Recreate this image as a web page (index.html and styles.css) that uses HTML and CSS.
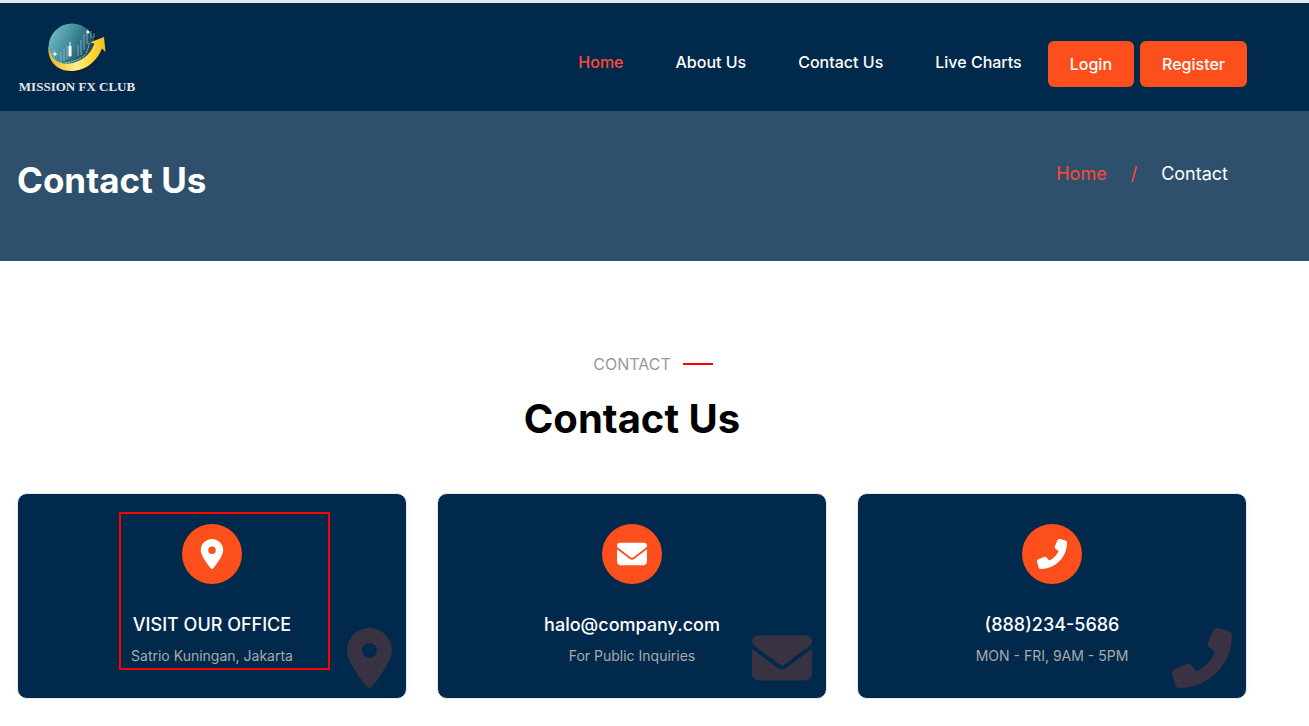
FILE: index.html
```
<!DOCTYPE html>
<html lang="en">
<head>
<meta charset="utf-8">
<meta name="viewport" content="width=device-width, initial-scale=1">
<title>Contact Us</title>
<link rel="stylesheet" href="styles.css">
</head>
<body>
<svg class="sprite" aria-hidden="true">
  <symbol id="pin" viewBox="0 0 384 512"><path d="M215.7 499.2C267 435 384 279.400 384 192C384 86 298 0 192 0S0 86 0 192c0 87.400 117 243 168.300 307.200c12.300 15.300 35.100 15.300 47.400 0zM192 128a64 64 0 1 1 0 128 64 64 0 1 1 0-128z"/></symbol>
  <symbol id="mail" viewBox="0 0 512 512"><path d="M48 64C21.500 64 0 85.500 0 112c0 15.100 7.100 29.300 19.200 38.400L236.800 313.600c11.400 8.500 27 8.500 38.400 0L492.800 150.400c12.100-9.100 19.200-23.300 19.200-38.400c0-26.500-21.500-48-48-48H48zM0 176V384c0 35.300 28.700 64 64 64H448c35.300 0 64-28.700 64-64V176L294.400 339.200c-22.800 17.100-54 17.100-76.800 0L0 176z"/></symbol>
  <symbol id="phone" viewBox="0 0 512 512"><path transform="matrix(-1 0 0 1 512 0)" d="M164.900 24.600c-7.700-18.600-28-28.500-47.400-23.200l-88 24C12.100 30.200 0 46 0 64C0 311.400 200.600 512 448 512c18 0 33.800-12.100 38.600-29.500l24-88c5.300-19.400-4.600-39.700-23.200-47.400l-96-40c-16.300-6.800-35.200-2.100-46.300 11.600L304.700 368C234.300 334.700 177.300 277.700 144 207.300L193.300 167c13.700-11.200 18.400-30 11.600-46.300l-40-96z"/></symbol>
</svg>

<header class="header">
  <div class="container header-row">
    <a class="logo" href="#" aria-label="Mission FX Club">
      <svg viewBox="0 0 120 74" width="120" height="74">
        <defs>
          <linearGradient id="globe" x1="0" y1="0.200" x2="1" y2="0.700">
            <stop offset="0" stop-color="#72bdc5"/>
            <stop offset="0.450" stop-color="#41899a"/>
            <stop offset="1" stop-color="#0c3349"/>
          </linearGradient>
          <linearGradient id="gold" x1="0" y1="0" x2="1" y2="0">
            <stop offset="0" stop-color="#e8b51f"/>
            <stop offset="0.500" stop-color="#fff08a"/>
            <stop offset="0.750" stop-color="#ffd83a"/>
            <stop offset="1" stop-color="#f1bd1c"/>
          </linearGradient>
        </defs>
        <circle cx="57" cy="28" r="24" fill="#101f30"/>
        <circle cx="55" cy="26" r="23.500" fill="url(#globe)"/>
        <path d="M34 33h7M37 29v8M44 31v12M47 28v12M50 25v13M61 24v11M64 19v15M67 13v16M70 8v15M74 10v7M77 12v5" stroke="#9ccbd0" stroke-width="1" opacity="0.700" fill="none"/>
        <path d="M48 42q9-1 16-5t8-15" stroke="#a9d2d5" stroke-width="1" stroke-dasharray="2 1" fill="none"/>
        <path d="M53 21v15" stroke="#fff" stroke-width="1"/>
        <path d="M51.500 25h3v10h-3z" fill="#fff"/>
        <circle cx="71" cy="11" r="1.500" fill="#fff"/>
        <circle cx="38" cy="33" r="1.500" fill="#fff"/>
        <path d="M31.500 25C33 38 42 45 56 42C68 39 75 30 77.500 22.500L73 21.500L87 16L88.500 31L85 27.500C80 40 69 50 54 50C39 50 30 39 31.500 25z" fill="url(#gold)"/>
        <text class="logo-text" x="60" y="70" text-anchor="middle">MISSION FX CLUB</text>
      </svg>
    </a>
    <div class="header-right">
      <nav class="nav">
        <a class="active" href="#">Home</a>
        <a href="#">About Us</a>
        <a href="#">Contact Us</a>
        <a href="#">Live Charts</a>
      </nav>
      <div class="actions">
        <button class="btn" type="button">Login</button>
        <button class="btn" type="button">Register</button>
      </div>
    </div>
  </div>
</header>

<section class="banner">
  <div class="container banner-row">
    <h1 class="banner-title">Contact Us</h1>
    <nav class="crumbs" aria-label="Breadcrumb">
      <a href="#">Home</a>
      <span class="slash">/</span>
      <span>Contact</span>
    </nav>
  </div>
</section>

<main class="container contact">
  <div class="section-head">
    <p class="eyebrow">CONTACT</p>
    <h2 class="section-title">Contact Us</h2>
  </div>
  <div class="cards">
    <article class="card">
      <span class="badge"><svg class="badge-icon"><use href="#pin"/></svg></span>
      <h3 class="card-title">VISIT OUR OFFICE</h3>
      <p class="card-text">Satrio Kuningan, Jakarta</p>
      <svg class="ghost ghost-pin"><use href="#pin"/></svg>
      <span class="marker"></span>
    </article>
    <article class="card">
      <span class="badge"><svg class="badge-icon"><use href="#mail"/></svg></span>
      <h3 class="card-title">halo@company.com</h3>
      <p class="card-text">For Public Inquiries</p>
      <svg class="ghost"><use href="#mail"/></svg>
    </article>
    <article class="card">
      <span class="badge"><svg class="badge-icon"><use href="#phone"/></svg></span>
      <h3 class="card-title">(888)234-5686</h3>
      <p class="card-text">MON - FRI, 9AM - 5PM</p>
      <svg class="ghost"><use href="#phone"/></svg>
    </article>
  </div>
</main>
</body>
</html>
```
FILE: styles.css
```
* { box-sizing: border-box; }

body {
  margin: 0;
  border-top: 3px solid #e8e8e8;
  background: #fff;
  font-family: Inter, "Liberation Sans", sans-serif;
  font-size: 16px;
  line-height: 24px;
}

h1, h2, h3, p { margin: 0; }
a { color: inherit; text-decoration: none; }
.sprite { display: none; }

.container { padding: 0 62px 0 17px; }

.header { background: #00294b; color: #fff; }
.header-row {
  display: flex;
  justify-content: space-between;
  align-items: flex-start;
  padding-top: 18px;
  padding-bottom: 16px;
}
.logo svg { display: block; }
.logo-text {
  font: bold 13px "Liberation Serif", serif;
  fill: #e4e6ea;
}
.header-right { display: flex; gap: 26px; padding-top: 20px; }
.nav { display: flex; gap: 52px; padding-top: 9px; font-weight: 500; }
.active { color: #ff4a36; }
.actions { display: flex; gap: 6px; }
.btn {
  height: 46px;
  padding: 0 22px;
  border: 0;
  border-radius: 6px;
  background: #fc4f1b;
  color: #fff;
  font: 500 16px Inter, sans-serif;
}

.banner { background: #2f506c; color: #fff; }
.banner-row {
  display: flex;
  justify-content: space-between;
  align-items: flex-start;
  padding-top: 48px;
  padding-bottom: 60px;
}
.banner-title { font-size: 35px; line-height: 42px; font-weight: 700; }
.crumbs { display: flex; gap: 24px; padding: 3px 19px 0 0; font-size: 18px; }
.crumbs a, .slash { color: #ff4a36; }

.contact { padding-top: 91px; padding-bottom: 28px; }
.section-head {
  display: flex;
  flex-direction: column;
  align-items: center;
  gap: 19px;
  margin-bottom: 50px;
}
.eyebrow {
  position: relative;
  color: #999;
}
.eyebrow::after {
  content: "";
  position: absolute;
  left: calc(100% + 12px);
  top: 11px;
  width: 30px;
  height: 2px;
  background: #f00;
}
.section-title { font-size: 40px; line-height: 48px; font-weight: 700; color: #000; }

.cards { display: grid; grid-template-columns: repeat(3, 1fr); gap: 30px; }
.card {
  position: relative;
  display: flex;
  flex-direction: column;
  align-items: center;
  padding: 30px 16px;
  border: 1px solid #e6eaee;
  border-radius: 10px;
  background: #00294b;
  color: #fff;
  box-shadow: 0 0 10px rgba(0, 0, 0, 0.03);
}
.badge {
  display: grid;
  place-items: center;
  width: 60px;
  height: 60px;
  margin-bottom: 29px;
  border-radius: 50%;
  background: #fc4f1b;
}
.badge-icon { width: 30px; height: 30px; fill: #fff; }
.card-title { font-size: 18px; line-height: 24px; font-weight: 500; margin-bottom: 7px; }
.card-text { font-size: 14px; line-height: 24px; color: #aaa; }
.ghost {
  position: absolute;
  right: 14px;
  bottom: 10px;
  width: 60px;
  height: 60px;
  fill: #393243;
}
.ghost-pin { width: 45px; }
.marker {
  position: absolute;
  inset: 18px 76px 28px 101px;
  border: 2px solid #f00;
}
```
